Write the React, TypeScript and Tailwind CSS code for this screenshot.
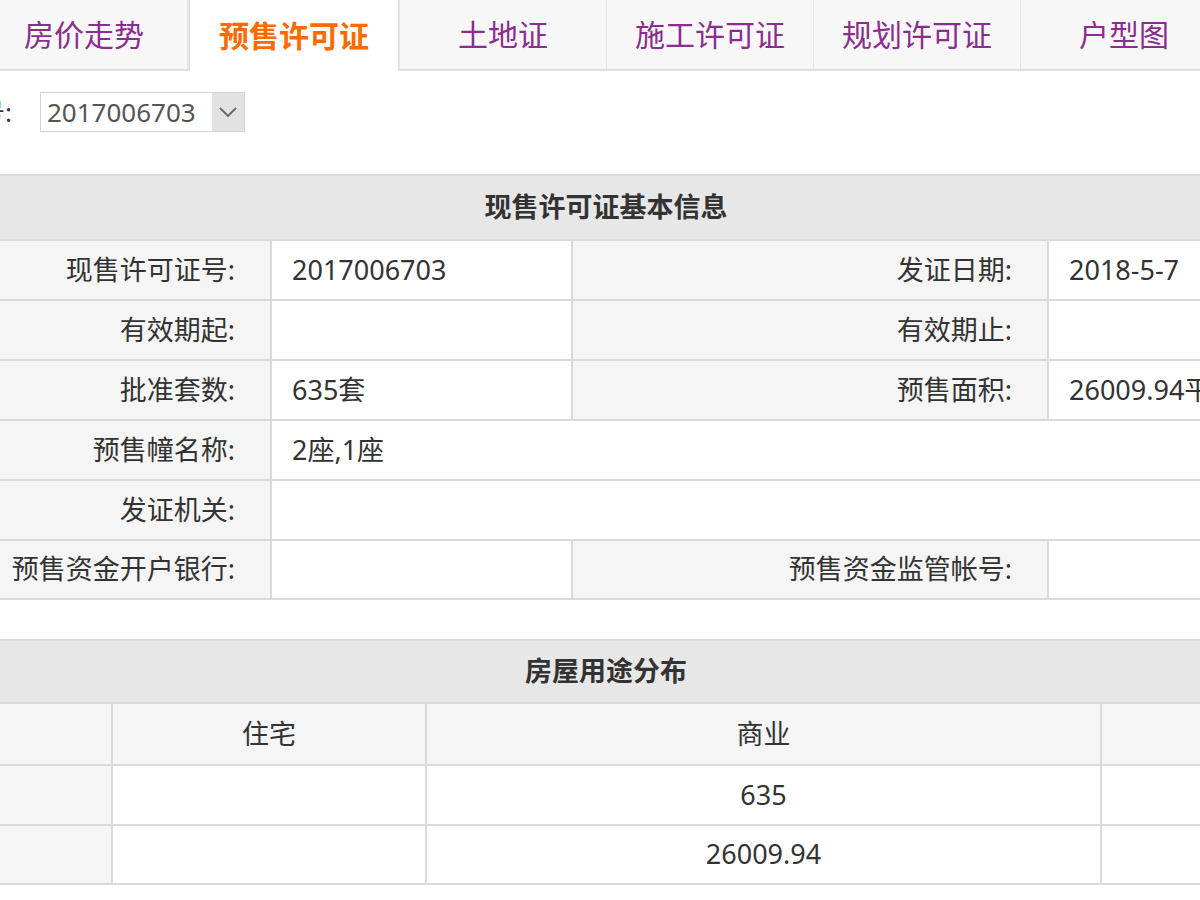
const tabs = ["房价走势", "预售许可证", "土地证", "施工许可证", "规划许可证", "户型图"];

const labelCls =
  "bg-[#f5f5f5] border-2 border-[#dadada] text-right pr-[35px] font-normal";
const valueCls = "bg-white border-2 border-[#dadada] text-left pl-[20px]";
const greyCell = "bg-[#f5f5f5] border-2 border-[#dadada]";
const whiteCell = "bg-white border-2 border-[#dadada]";

export default function App() {
  return (
    <div className="w-[1200px] h-[900px] overflow-hidden bg-white text-[#333] font-['Noto_Sans','Noto_Sans_CJK_SC',sans-serif]">
      <div className="-ml-[30px] w-[1270px]">
        {/* tabs */}
        <div className="flex h-[71px] ml-[11px] border-b-2 border-[#dedede]">
          {tabs.map((t, i) =>
            i === 1 ? (
              <div
                key={t}
                className="w-[212px] h-[71px] -mb-[2px] bg-white border-x-2 border-[#e3e3e3] flex items-center justify-center text-[30px] font-bold text-[#ff6a00]"
              >
                {t}
              </div>
            ) : (
              <div
                key={t}
                className="w-[207px] h-full bg-[#f7f7f7] border-r border-[#e6e6e6] flex items-center justify-center text-[30px] text-[#8b2c8e]"
              >
                {t}
              </div>
            )
          )}
        </div>

        {/* license select */}
        <div className="flex items-center h-[40px] mt-[21px]">
          <div className="w-[42px] text-right text-[26px] whitespace-nowrap overflow-hidden flex justify-end">
            <span>证号:</span>
          </div>
          <div className="ml-[28px] w-[205px] h-[40px] border border-[#d5d5d5] flex items-stretch">
            <div className="flex-1 flex items-center pl-[6px] text-[26px] text-[#555]">2017006703</div>
            <div className="w-[32px] bg-[#e2e2e2] flex items-center justify-center">
              <svg width="20" height="12" viewBox="0 0 20 12" fill="none">
                <path d="M2 2 L10 10 L18 2" stroke="#666" strokeWidth="1.8" />
              </svg>
            </div>
          </div>
        </div>

        {/* table 1 */}
        <table className="mt-[42px] w-[1270px] table-fixed border-collapse text-[27px]">
          <colgroup>
            <col className="w-[300px]" />
            <col className="w-[301px]" />
            <col className="w-[476px]" />
            <col className="w-[193px]" />
          </colgroup>
          <tbody>
            <tr className="h-[65px]">
              <th colSpan={4} className="bg-[#e7e7e7] border-2 border-[#dadada] font-bold text-center">
                现售许可证基本信息
              </th>
            </tr>
            <tr className="h-[60px]">
              <td className={labelCls}>现售许可证号:</td>
              <td className={valueCls}>2017006703</td>
              <td className={labelCls}>发证日期:</td>
              <td className={valueCls + " whitespace-nowrap"}>2018-5-7</td>
            </tr>
            <tr className="h-[60px]">
              <td className={labelCls}>有效期起:</td>
              <td className={valueCls}></td>
              <td className={labelCls}>有效期止:</td>
              <td className={valueCls}></td>
            </tr>
            <tr className="h-[60px]">
              <td className={labelCls}>批准套数:</td>
              <td className={valueCls}>635套</td>
              <td className={labelCls}>预售面积:</td>
              <td className={valueCls + " whitespace-nowrap overflow-hidden"}>26009.94平方米</td>
            </tr>
            <tr className="h-[60px]">
              <td className={labelCls}>预售幢名称:</td>
              <td colSpan={3} className={valueCls}>2座,1座</td>
            </tr>
            <tr className="h-[60px]">
              <td className={labelCls}>发证机关:</td>
              <td colSpan={3} className={valueCls}></td>
            </tr>
            <tr className="h-[59px]">
              <td className={labelCls + " whitespace-nowrap"}>预售资金开户银行:</td>
              <td className={valueCls}></td>
              <td className={labelCls}>预售资金监管帐号:</td>
              <td className={valueCls}></td>
            </tr>
          </tbody>
        </table>

        {/* table 2 */}
        <table className="mt-[39px] w-[1270px] table-fixed border-collapse text-[27px]">
          <colgroup>
            <col className="w-[141px]" />
            <col className="w-[314px]" />
            <col className="w-[675px]" />
            <col className="w-[140px]" />
          </colgroup>
          <tbody>
            <tr className="h-[63px]">
              <th colSpan={4} className="bg-[#e7e7e7] border-2 border-[#dadada] font-bold text-center">
                房屋用途分布
              </th>
            </tr>
            <tr className="h-[62px]">
              <td className={greyCell}></td>
              <td className={greyCell + " text-center"}>住宅</td>
              <td className={greyCell + " text-center"}>商业</td>
              <td className={greyCell}></td>
            </tr>
            <tr className="h-[60px]">
              <td className={greyCell}></td>
              <td className={whiteCell}></td>
              <td className={whiteCell + " text-center"}>635</td>
              <td className={whiteCell}></td>
            </tr>
            <tr className="h-[59px]">
              <td className={greyCell}></td>
              <td className={whiteCell}></td>
              <td className={whiteCell + " text-center"}>26009.94</td>
              <td className={whiteCell}></td>
            </tr>
          </tbody>
        </table>
      </div>
    </div>
  );
}
